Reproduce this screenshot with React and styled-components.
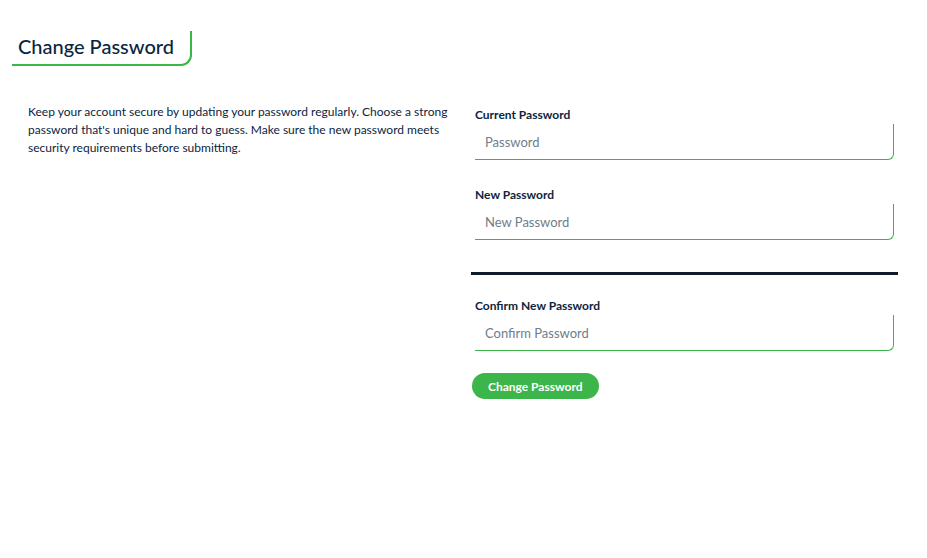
import React from "react";
import styled, { createGlobalStyle } from "styled-components";

const GlobalStyle = createGlobalStyle`
  body {
    margin: 0;
    background: #ffffff;
    font-family: "Lato", "Noto Sans", sans-serif;
    color: #0b2540;
  }
`;

const Page = styled.div`
  width: 927px;
  height: 558px;
  padding: 31px 0 0 12px;
  box-sizing: border-box;
`;

const TitleBox = styled.div`
  display: inline-block;
  padding: 4px 16px 7px 6px;
  border-right: 2px solid #3cb54a;
  border-bottom: 2px solid #3cb54a;
  border-bottom-right-radius: 11px;
`;

const Title = styled.h1`
  margin: 0;
  font-size: 20px;
  font-weight: 500;
  color: #0b2540;
  line-height: 22px;
`;

const Columns = styled.div`
  display: grid;
  grid-template-columns: 460px 427px;
  margin-top: 37px;
`;

const Description = styled.p`
  margin: 0;
  padding-left: 16px;
  width: 430px;
  font-size: 12px;
  line-height: 18px;
  color: #0b2540;
`;

const Form = styled.form`
  display: flex;
  flex-direction: column;
  padding-top: 4px;
`;

const Field = styled.div`
  display: flex;
  flex-direction: column;
  padding-left: 3px;
  width: 419px;
`;

const Label = styled.label`
  font-size: 12px;
  font-weight: 700;
  color: #0b2540;
  line-height: 16px;
  margin-bottom: 1px;
`;

const Input = styled.input`
  height: 36px;
  box-sizing: border-box;
  border: none;
  border-right: 1px solid #3cb54a;
  border-bottom: 1px solid #3cb54a;
  border-bottom-right-radius: 6px;
  padding: 0 10px;
  font-family: "Lato", "Noto Sans", sans-serif;
  font-size: 13px;
  color: #0b2540;
  outline: none;
  background: transparent;

  &::placeholder {
    color: #6f7d8a;
  }
`;

const Spacer = styled.div`
  height: ${(p) => p.$h}px;
`;

const Divider = styled.hr`
  margin: 0;
  border: none;
  height: 3px;
  width: 427px;
  margin-left: -1px;
  background: #0d1b2a;
`;

const Button = styled.button`
  align-self: flex-start;
  height: 26px;
  padding: 0 16px;
  border: none;
  border-radius: 13px;
  background: #3cb54a;
  color: #ffffff;
  font-family: "Lato", "Noto Sans", sans-serif;
  font-size: 12px;
  font-weight: 700;
  cursor: pointer;
`;

export default function App() {
  return (
    <>
      <GlobalStyle />
      <Page>
        <TitleBox>
          <Title>Change Password</Title>
        </TitleBox>
        <Columns>
          <Description>
            Keep your account secure by updating your password regularly. Choose a strong
            password that's unique and hard to guess. Make sure the new password meets
            security requirements before submitting.
          </Description>
          <Form onSubmit={(e) => e.preventDefault()}>
            <Field>
              <Label>Current Password</Label>
              <Input type="password" placeholder="Password" />
            </Field>
            <Spacer $h={27} />
            <Field>
              <Label>New Password</Label>
              <Input type="password" placeholder="New Password" />
            </Field>
            <Spacer $h={32} />
            <Divider />
            <Spacer $h={23} />
            <Field>
              <Label>Confirm New Password</Label>
              <Input type="password" placeholder="Confirm Password" />
            </Field>
            <Spacer $h={22} />
            <Button type="submit">Change Password</Button>
          </Form>
        </Columns>
      </Page>
    </>
  );
}
